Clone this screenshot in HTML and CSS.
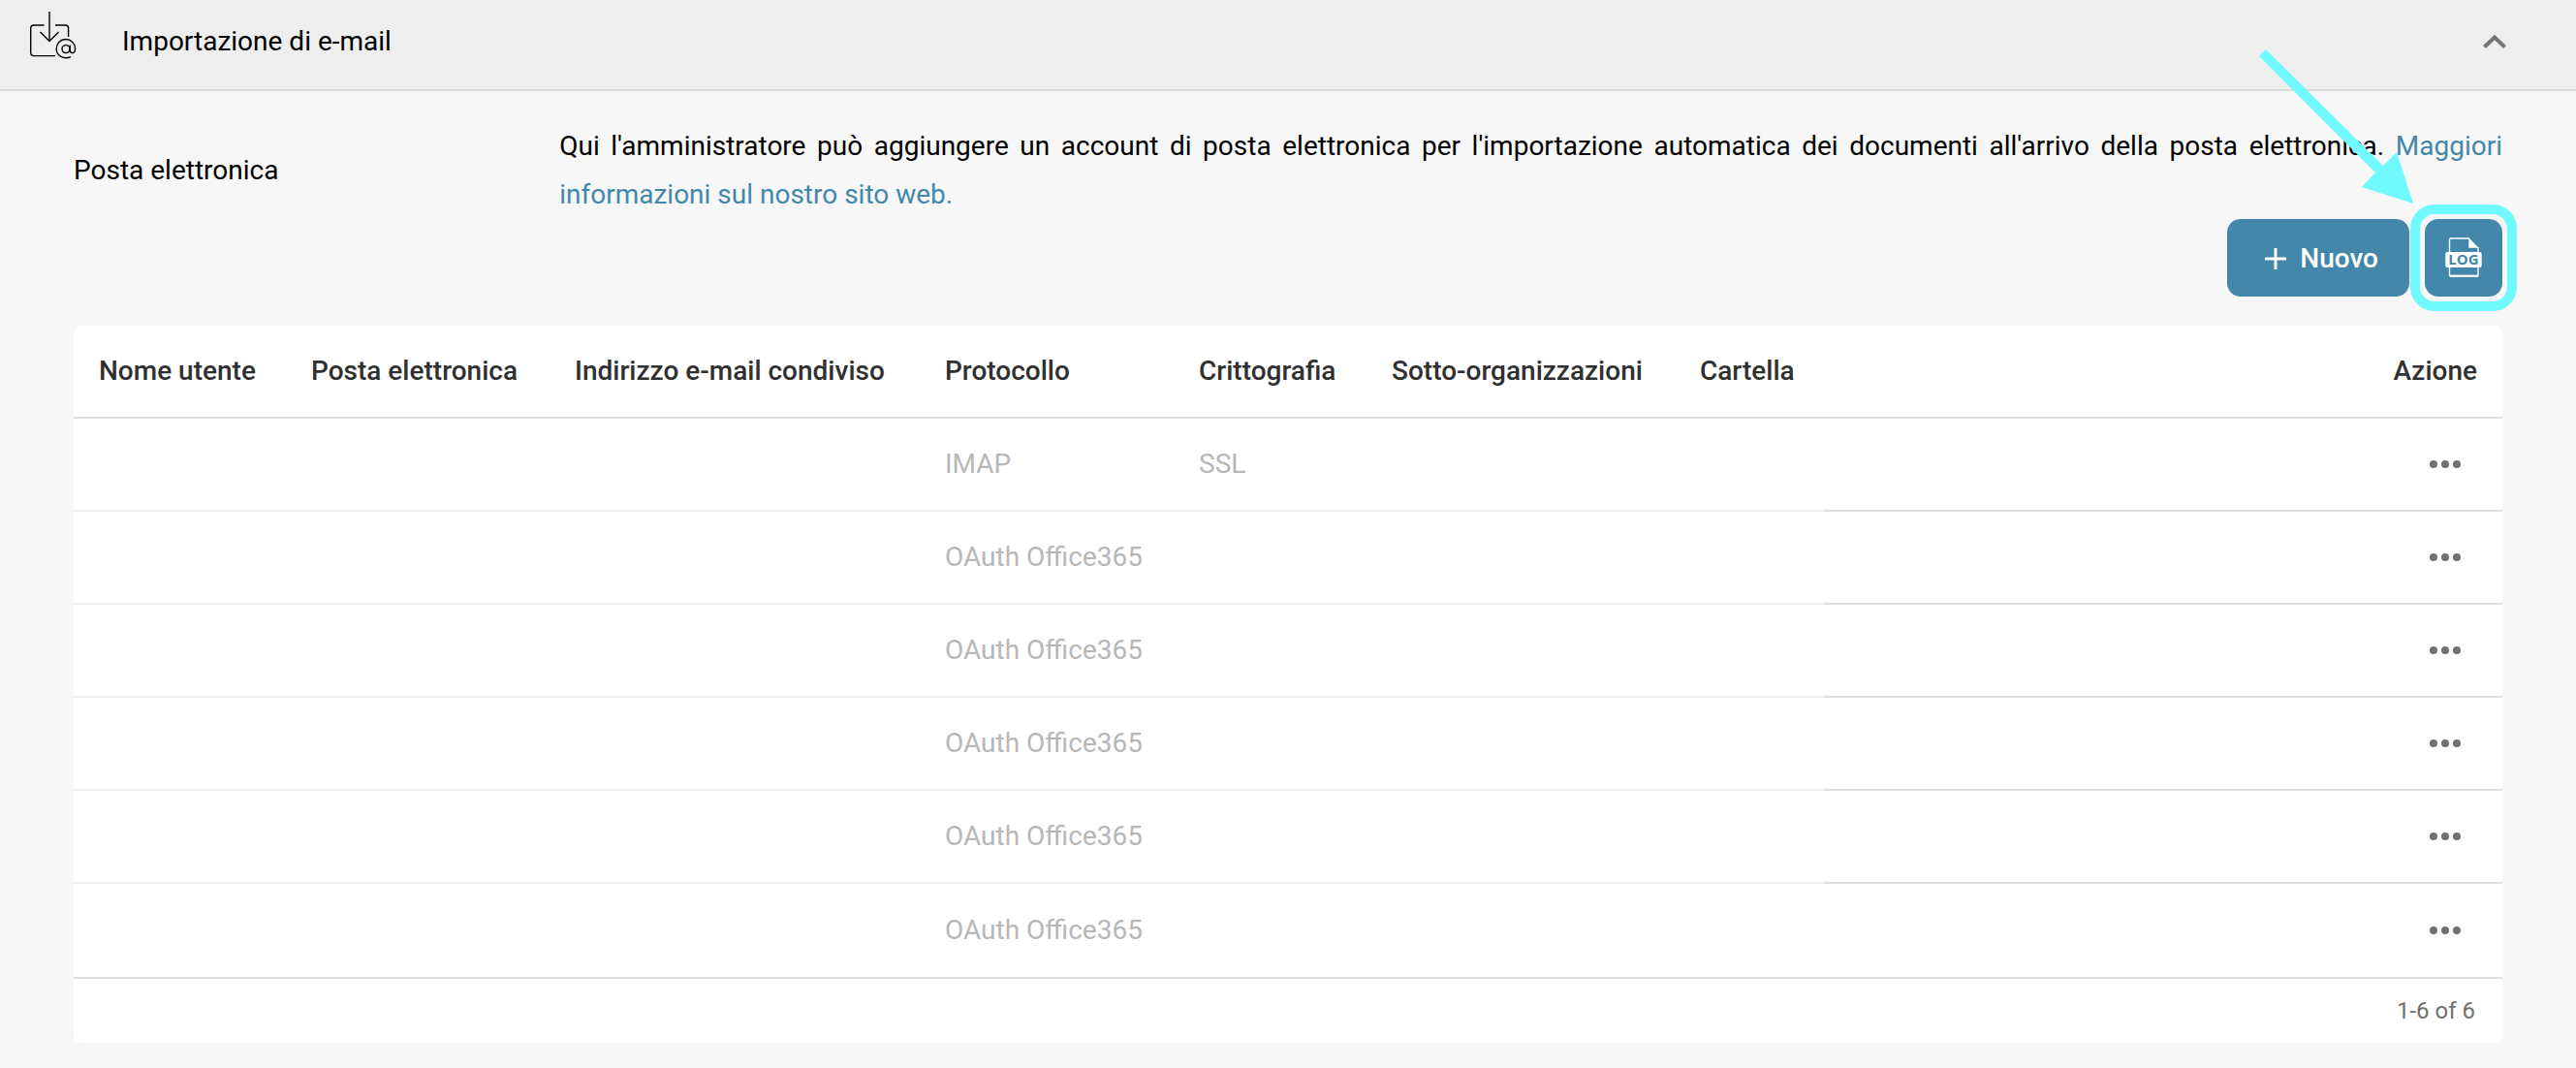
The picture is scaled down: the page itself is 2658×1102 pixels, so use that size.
FILE: index.html
```html
<!DOCTYPE html>
<html lang="it">
<head>
<meta charset="utf-8">
<meta name="viewport" content="width=device-width, initial-scale=1">
<title>Importazione di e-mail</title>
<link rel="stylesheet" href="styles.css">
</head>
<body>
<header class="panel-header">
  <svg class="panel-icon" viewBox="30 10 50 52" fill="none" stroke="currentColor" stroke-width="1.4" aria-hidden="true">
    <path d="M45.5 26H35q-3.3 0-3.3 3.300V54.300q0 3.300 3.300 3.300H57M57 26h10.300q3.300 0 3.300 3.300V38"/>
    <path d="M51 12v30.500M41.500 33l9.500 9.500 9.500-9.500"/>
    <path d="M73 58.600C66 62 58.200 57.500 58.200 50.500a9.700 9.700 0 0 1 19.400-.5c0 3-1 4.600-2.800 4.600s-2.600-1.200-2.600-3V46.500"/>
    <ellipse cx="68" cy="50.600" rx="4" ry="4"/>
  </svg>
  <h1 class="panel-title">Importazione di e-mail</h1>
  <button class="collapse" type="button" aria-label="Comprimi" aria-expanded="true">
    <svg viewBox="0 0 24 16" width="24" height="16" fill="none" stroke="currentColor" stroke-width="4" aria-hidden="true"><path d="M1.500 13.500L12 3.500l10.500 10"/></svg>
  </button>
</header>
<main class="panel-body">
  <section class="intro">
    <h2 class="intro-label">Posta elettronica</h2>
    <p class="intro-text">Qui l'amministratore può aggiungere un account di posta elettronica per l'importazione automatica dei documenti all'arrivo della posta elettronica. <a class="link" href="#">Maggiori informazioni sul nostro sito web.</a></p>
  </section>
  <div class="toolbar">
    <button class="btn btn-new" type="button">
      <svg viewBox="0 0 24 24" width="24" height="24" stroke="currentColor" stroke-width="3" aria-hidden="true"><path d="M1 12h22M12 1v22"/></svg>
      Nuovo
    </button>
    <div class="highlight">
      <button class="btn btn-log" type="button" aria-label="Log">
        <svg viewBox="20 18 40 44" width="40" height="44" aria-hidden="true">
          <path d="M46 20H26.500q-1 0-1 1V58q0 1 1 1H54q1 0 1-1V29" fill="none" stroke="#fff" stroke-width="1.400"/>
          <path d="M25.500 58.600H55" stroke="#fff" stroke-width="2"/>
          <path d="M45.300 19.300L55.500 29.700H45.300z" fill="#fff"/>
          <rect x="21.300" y="34" width="37.400" height="16" rx="2" fill="#fff"/>
          <text class="log-text" x="40" y="47" text-anchor="middle">LOG</text>
        </svg>
      </button>
      <svg class="arrow" viewBox="0 0 159 159" aria-hidden="true"><path d="M7 0L128 120 142 106 159 159 106 142 120 127 0 7z"/></svg>
    </div>
  </div>
  <div class="card">
    <table class="accounts">
      <colgroup>
        <col class="col-user"><col class="col-mail"><col class="col-shared"><col class="col-protocol"><col class="col-crypt"><col class="col-org"><col class="col-folder"><col>
      </colgroup>
      <thead>
        <tr><th>Nome utente</th><th>Posta elettronica</th><th>Indirizzo e-mail condiviso</th><th>Protocollo</th><th>Crittografia</th><th>Sotto-organizzazioni</th><th>Cartella</th><th class="action">Azione</th></tr>
      </thead>
      <tbody>
        <tr><td></td><td></td><td></td><td>IMAP</td><td>SSL</td><td></td><td></td><td class="action"><button class="more" type="button" aria-label="Azioni"><i></i><i></i><i></i></button></td></tr>
        <tr><td></td><td></td><td></td><td>OAuth Office365</td><td></td><td></td><td></td><td class="action"><button class="more" type="button" aria-label="Azioni"><i></i><i></i><i></i></button></td></tr>
        <tr><td></td><td></td><td></td><td>OAuth Office365</td><td></td><td></td><td></td><td class="action"><button class="more" type="button" aria-label="Azioni"><i></i><i></i><i></i></button></td></tr>
        <tr><td></td><td></td><td></td><td>OAuth Office365</td><td></td><td></td><td></td><td class="action"><button class="more" type="button" aria-label="Azioni"><i></i><i></i><i></i></button></td></tr>
        <tr><td></td><td></td><td></td><td>OAuth Office365</td><td></td><td></td><td></td><td class="action"><button class="more" type="button" aria-label="Azioni"><i></i><i></i><i></i></button></td></tr>
        <tr><td></td><td></td><td></td><td>OAuth Office365</td><td></td><td></td><td></td><td class="action"><button class="more" type="button" aria-label="Azioni"><i></i><i></i><i></i></button></td></tr>
      </tbody>
    </table>
    <footer class="pager">1-6 of 6</footer>
  </div>
</main>
</body>
</html>
```

FILE: styles.css
```css
* { box-sizing: border-box; }

body {
  margin: 0;
  background: #f7f7f7;
  color: #000;
  font-family: Roboto, "Liberation Sans", sans-serif;
  font-size: 28px;
  line-height: 32px;
}

button {
  border: 0;
  font: inherit;
  cursor: pointer;
}

.panel-header {
  display: flex;
  align-items: center;
  gap: 46px;
  padding: 10px 72px 16px 30px;
  background: #eee;
  border-bottom: 2px solid #d9d9d9;
}

.panel-icon {
  width: 50px;
  height: 52px;
  margin-bottom: 14px;
}

.panel-title,
.intro-label {
  margin: 0;
  font-size: 28px;
  font-weight: 400;
}

.panel-title { flex: 1; }

.collapse {
  display: flex;
  padding: 0;
  background: none;
  color: #757575;
}

.panel-body { padding: 32px 76px 26px; }

.intro {
  display: grid;
  grid-template-columns: 1fr 4fr;
  align-items: center;
}

.intro-text {
  margin: 0;
  line-height: 50px;
  text-align: justify;
}

.link {
  color: #4387ab;
  text-decoration: none;
}

.toolbar {
  display: flex;
  justify-content: flex-end;
  gap: 16px;
  padding-bottom: 30px;
}

.btn {
  display: flex;
  align-items: center;
  justify-content: center;
  height: 80px;
  border-radius: 14px;
  background: #4387ab;
  color: #fff;
  font-weight: 500;
}

.btn-new {
  gap: 13px;
  padding: 2px 32px 0 38px;
}

.btn-log {
  width: 80px;
  padding: 0;
}

.log-text {
  fill: #4387ab;
  font: 700 15px "Open Sans", sans-serif;
}

/* Callout ring and arrow drawn over the log button */
.highlight { position: relative; }

.highlight::after {
  content: "";
  position: absolute;
  inset: -15px;
  border: 10px solid #70faff;
  border-radius: 25px;
  pointer-events: none;
}

.arrow {
  position: absolute;
  top: -175px;
  left: -171px;
  width: 159px;
  height: 159px;
  fill: #70faff;
  pointer-events: none;
}

.card {
  overflow: hidden;
  border-radius: 8px;
  background: #fff;
}

.accounts {
  width: 100%;
  border-collapse: separate;
  border-spacing: 0;
  table-layout: fixed;
}

.col-user { width: 219px; }
.col-mail { width: 272px; }
.col-shared { width: 382px; }
.col-protocol { width: 262px; }
.col-crypt { width: 199px; }
.col-org { width: 318px; }
.col-folder { width: 154px; }

.accounts th,
.accounts td {
  height: 96px;
  padding: 0 0 0 26px;
  border-bottom: 2px solid #efefef;
  color: #b7b7b7;
  text-align: left;
  white-space: nowrap;
}

.accounts th {
  border-color: #dfdfdf;
  color: #303030;
  font-weight: 500;
}

.accounts .action {
  padding-right: 26px;
  border-color: #dfdfdf;
  text-align: right;
}

.accounts tbody tr:last-child td {
  height: 98px;
  border-color: #dfdfdf;
}

.more {
  display: flex;
  gap: 4px;
  margin-left: auto;
  padding: 12px 17px;
  background: none;
}

.more i {
  width: 8px;
  height: 8px;
  border-radius: 50%;
  background: #707070;
}

.pager {
  padding: 17px 28px;
  color: #707070;
  font-size: 24px;
  text-align: right;
}
```
